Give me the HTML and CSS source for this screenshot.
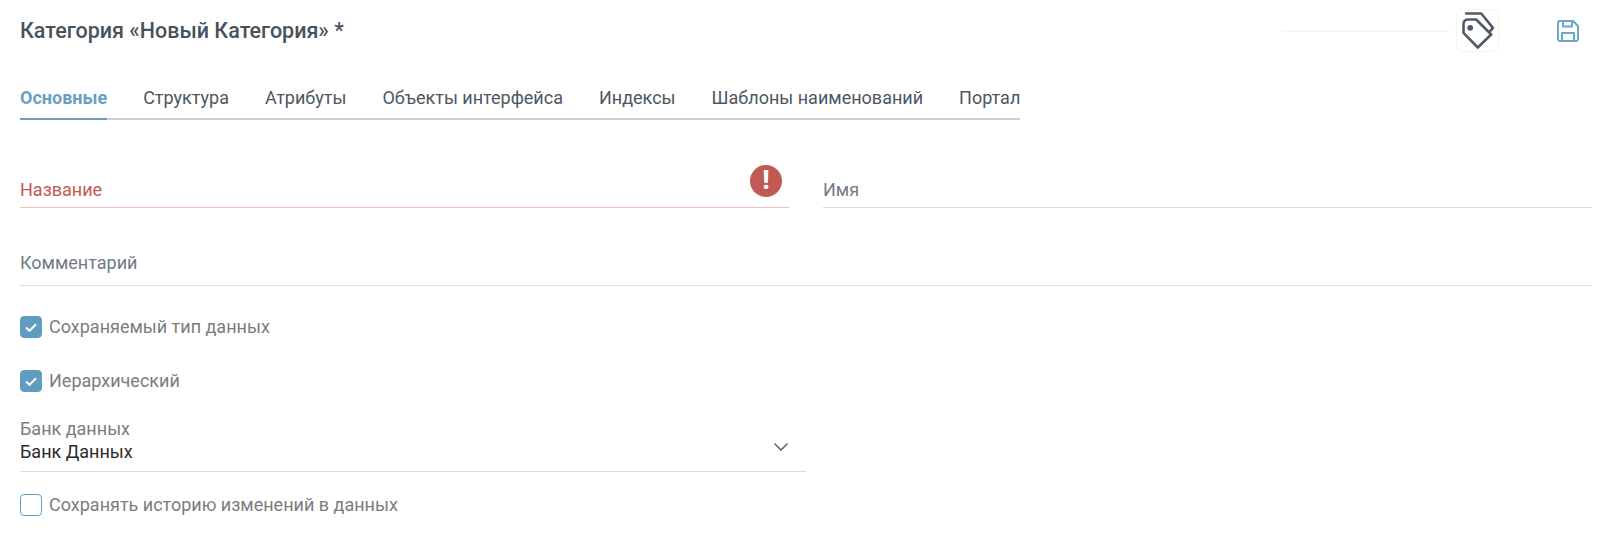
FILE: index.html
```html
<!DOCTYPE html>
<html lang="ru">
  <head>
    <meta charset="UTF-8" />
    <title>Категория</title>
    <link rel="stylesheet" href="styles.css">
  </head>
  <body>
    <header class="header">
      <h1 class="title">Категория «Новый Категория» *</h1>
      <div class="toolbar">
        <div class="toolbar-line"></div>
        <div class="tag-button">
          <svg class="tag-icon" width="36" height="37" viewBox="0 0 36 37" fill="none" stroke="#4f5b67" stroke-width="2.6" stroke-linejoin="round" stroke-linecap="round">
            <path d="M3.5 12.5 L3.5 20.8 L17.8 35.5 L31.2 22.5 L16.2 7.5 L7.8 7.5 Q3.5 7.5 3.5 12.5 Z" />
            <path d="M6.2 1.5 L21.2 1.5 L33 15.8 L29.5 19.8" />
            <circle cx="10.2" cy="15.8" r="1.6" fill="#4f5b67" />
          </svg>
        </div>
        <svg class="save-icon" width="24" height="24" viewBox="0 0 24 24" fill="none" stroke="#6aa7c9" stroke-width="2" stroke-linejoin="round">
          <path d="M2 4 Q2 2 4 2 L17 2 L22 7 L22 20 Q22 22 20 22 L4 22 Q2 22 2 20 Z" />
          <path d="M7 2 L7 7.5 L16 7.5 L16 2" />
          <path d="M6 22 L6 14 L18 14 L18 22" />
        </svg>
      </div>
    </header>

    <nav class="tabs">
      <a class="tab active">Основные</a>
      <a class="tab">Структура</a>
      <a class="tab">Атрибуты</a>
      <a class="tab">Объекты интерфейса</a>
      <a class="tab">Индексы</a>
      <a class="tab">Шаблоны наименований</a>
      <a class="tab">Портал</a>
    </nav>

    <form class="form">
      <div class="row">
        <div class="field error">
          <span>Название</span>
          <span class="error-icon">!</span>
        </div>
        <div class="field">
          <span>Имя</span>
        </div>
      </div>

      <div class="field comment">
        <span>Комментарий</span>
      </div>

      <label class="check first">
        <span class="box checked">
          <svg width="14" height="11" viewBox="0 0 14 11" fill="none" stroke="#fff" stroke-width="2.1"><path d="M2 5.5 L5.5 8.8 L12 2.2" /></svg>
        </span>
        Сохраняемый тип данных
      </label>
      <label class="check second">
        <span class="box checked">
          <svg width="14" height="11" viewBox="0 0 14 11" fill="none" stroke="#fff" stroke-width="2.1"><path d="M2 5.5 L5.5 8.8 L12 2.2" /></svg>
        </span>
        Иерархический
      </label>

      <div class="select">
        <div>
          <div class="select-label">Банк данных</div>
          <div class="select-value">Банк Данных</div>
        </div>
        <svg class="chevron" width="16" height="10" viewBox="0 0 16 10" fill="none" stroke="#5f6b76" stroke-width="1.6"><path d="M1.5 1.5 L8 8 L14.5 1.5" /></svg>
      </div>

      <label class="check third">
        <span class="box"></span>
        Сохранять историю изменений в данных
      </label>
    </form>
  </body>
</html>
```

FILE: styles.css
```css
* {
  box-sizing: border-box;
  margin: 0;
  padding: 0;
}

body {
  font-family: "Roboto", sans-serif;
  font-size: 18px;
  background: #fff;
  padding: 0 10px 0 20px;
  overflow: hidden;
  height: 549px;
}

.header {
  display: flex;
  justify-content: space-between;
  align-items: center;
  height: 61px;
}

.title {
  font-size: 21.5px;
  font-weight: 500;
  color: #47525d;
}

.toolbar {
  display: flex;
  align-items: center;
}

.toolbar-line {
  width: 168px;
  height: 2px;
  background: #f6f6f6;
  margin-right: 7px;
}

.tag-button {
  width: 43px;
  height: 43px;
  border: 1px solid #f4f4f4;
  border-radius: 6px;
  display: flex;
  align-items: center;
  justify-content: center;
  margin-right: 57px;
}

.tag-icon {
  margin-bottom: 1px;
}

.save-icon {
  margin-right: 12px;
}

/* Tabs */
.tabs {
  display: inline-flex;
  gap: 36px;
  margin-top: 17px;
  border-bottom: 2px solid #cfcfcf;
  height: 42px;
}

.tab {
  color: #4c5762;
  line-height: 40px;
  height: 42px;
  white-space: nowrap;
}

.tab.active {
  color: #6a9fc1;
  font-weight: 700;
  border-bottom: 2px solid #6a9fc1;
}

/* Fields */
.form {
  display: block;
}

.row {
  display: grid;
  grid-template-columns: 769px 769px;
  gap: 34px;
  margin-top: 44px;
}

.field {
  position: relative;
  height: 44px;
  border-bottom: 1px solid #dcdcdc;
  color: #6f7a85;
  display: flex;
  align-items: flex-end;
  padding-bottom: 7px;
  line-height: 20px;
}

.field.error {
  color: #c05a52;
  border-bottom-color: #eebfbc;
}

.error-icon {
  position: absolute;
  right: 7px;
  top: 1px;
  width: 32px;
  height: 32px;
  border-radius: 50%;
  background: #bf5a54;
  color: #fff;
  font-weight: 900;
  font-size: 25px;
  line-height: 32px;
  text-align: center;
}

.field.comment {
  margin-top: 34px;
  width: 1572px;
  padding-bottom: 12px;
}

/* Checkboxes */
.check {
  display: flex;
  align-items: center;
  gap: 7px;
  color: #7c7c7c;
  height: 22px;
  line-height: 22px;
}

.check.first {
  margin-top: 30px;
}

.check.second {
  margin-top: 32px;
}

.check.third {
  margin-top: 22px;
}

.box {
  width: 22px;
  height: 22px;
  border: 1px solid #5f9cc0;
  border-radius: 4px;
  display: flex;
  align-items: center;
  justify-content: center;
  flex-shrink: 0;
}

.box.checked {
  background: #5f9cc0;
}

/* Select */
.select {
  width: 786px;
  height: 61px;
  margin-top: 19px;
  padding-bottom: 2px;
  border-bottom: 1px solid #dcdcdc;
  display: flex;
  justify-content: space-between;
  align-items: center;
  padding-right: 17px;
}

.select-label {
  color: #7c7c7c;
  line-height: 23px;
}

.select-value {
  color: #2b2b2b;
  line-height: 23px;
}

.chevron {
  margin-top: 14px;
}
```
